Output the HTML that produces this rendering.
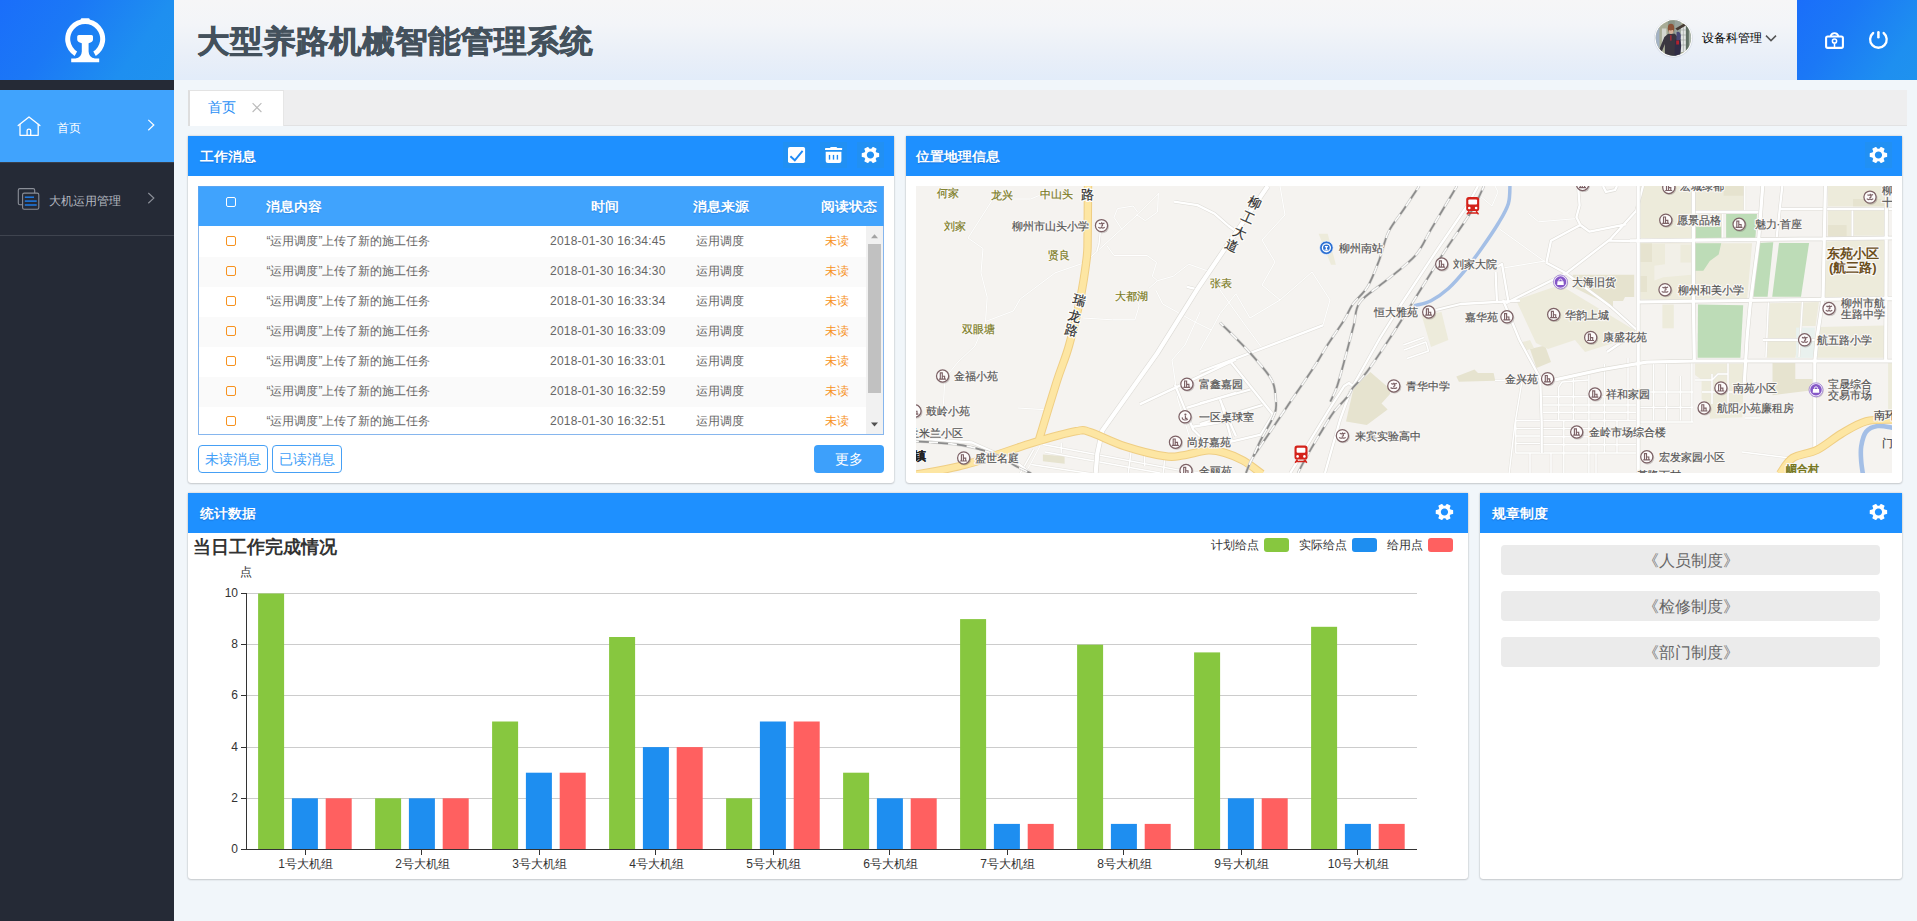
<!DOCTYPE html>
<html lang="zh"><head><meta charset="utf-8"><title>大型养路机械智能管理系统</title>
<style>
*{box-sizing:border-box;margin:0;padding:0}
html,body{width:1917px;height:921px;overflow:hidden}
body{position:relative;background:#f1f6fa;font-family:"Liberation Sans",sans-serif;font-size:12px;color:#666}
.abs{position:absolute}
.t{position:absolute;white-space:nowrap}
#side{left:0;top:0;width:174px;height:921px;background:#252a36}
#logo{left:0;top:0;width:174px;height:80px;background:linear-gradient(125deg,#1a6efa 0%,#1b78f6 35%,#1e8ff0 75%,#1f92ee 100%)}
#m1{left:0;top:90px;width:174px;height:72px;background:#40a3fd}
#m1b{left:0;top:162px;width:174px;height:1px;background:#3a3f4a}
#m2b{left:0;top:235px;width:174px;height:1px;background:#3f444f}
#head{left:174px;top:0;width:1623px;height:80px;background:linear-gradient(180deg,#f6f6f7 0%,#f3f5f8 30%,#e9eff8 70%,#e2ecf9 100%)}
#hr{left:1797px;top:0;width:120px;height:80px;background:linear-gradient(125deg,#1a6efa 0%,#1b78f6 35%,#1e8ff0 80%,#1f92ee 100%)}
#title{left:197px;top:18px;height:48px;line-height:48px;font-size:33px;font-weight:bold;color:#44515c;-webkit-text-stroke:.7px #44515c;transform:scaleY(.95);transform-origin:0 23.5px}
#tabbar{left:188px;top:90px;width:1719px;height:36px;background:#eeeeef;border-bottom:1px solid #e2e2e3}
#tab{left:188px;top:90px;width:96px;height:36px;background:#fff;border-left:2px solid #dedede;border-right:1px solid #e6e6e6;border-top:1px solid #e3e3e3}
.panel{position:absolute;background:#fff;border-radius:0 0 3px 3px;box-shadow:0 0 2px rgba(0,0,0,.24),0 1px 2px rgba(0,0,0,.12)}
.ph{position:absolute;left:0;top:0;right:0;height:40px;background:#1e90ff}
.pt{position:absolute;top:0;height:40px;line-height:40px;font-size:14px;font-weight:bold;color:#fff;white-space:nowrap;text-shadow:0 1px 1px rgba(0,40,120,.25);transform:scaleY(.94)}
.ib{position:absolute;width:27px;height:26px;background:#2190f3}
</style></head><body>
<div id="side" class="abs"></div>
<div id="logo" class="abs"></div>
<svg class="abs" style="left:60px;top:14px" width="50" height="52" viewBox="60 14 50 52">
<g fill="#fff" stroke="none">
<path d="M74.6 55.9 A20 20 0 1 1 95.8 55.9 L93.3 51.6 A15 15 0 1 0 77.1 51.6 Z"/>
<rect x="80.8" y="18.2" width="8.8" height="3.4" rx="1"/>
<path d="M78.9 34.9 H91.5 Q93 34.9 93 36.6 V39.6 Q93 42.4 88.6 43.2 V51.5 Q88.8 57.6 95 58.6 H99.2 V62.3 H71.2 V58.6 H75.4 Q81.6 57.6 81.8 51.5 V43.2 Q77.2 42.4 77.2 39.6 V36.6 Q77.2 34.9 78.9 34.9 Z"/>
</g></svg>
<div id="m1" class="abs"></div><div id="m1b" class="abs"></div><div id="m2b" class="abs"></div>
<svg class="abs" style="left:14px;top:112px" width="30" height="28" viewBox="14 112 30 28">
<g fill="none" stroke="#fff" stroke-width="1.3" stroke-linejoin="round" stroke-linecap="round">
<path d="M18.2 125.6 L29 117 L39.9 125.6"/>
<path d="M20 124.4 V135.3 H38.2 V124.4"/>
<path d="M27.1 135.3 V130.6 Q27.1 129.2 28.9 129.2 Q30.7 129.2 30.7 130.6 V135.3"/>
</g></svg>
<div class="t" style="left:57px;top:118px;height:20px;line-height:20px;font-size:12px;color:#fff">首页</div>
<svg class="abs" style="left:144px;top:116px" width="14" height="18" viewBox="144 116 14 18">
<path d="M148.3 119.9 L153.8 125 L148.3 130.2" fill="none" stroke="#fff" stroke-width="1.2"/></svg>
<svg class="abs" style="left:14px;top:184px" width="30" height="30" viewBox="14 184 30 30">
<rect x="18.3" y="188.6" width="16.4" height="16.2" rx="1.6" fill="none" stroke="#8b8f98" stroke-width="1.1"/>
<rect x="22.6" y="193.1" width="16.2" height="16.2" rx="1.6" fill="#252a36" stroke="#8b8f98" stroke-width="1.1"/>
<g stroke="#1e7be6" stroke-width="1.5"><path d="M24.8 197.2 H34"/><path d="M24.8 201.1 H36.7"/><path d="M24.8 205 H36.7"/></g>
</svg>
<div class="t" style="left:48.5px;top:191px;height:20px;line-height:20px;font-size:12px;color:#b4b8c0">大机运用管理</div>
<svg class="abs" style="left:144px;top:189px" width="14" height="18" viewBox="144 189 14 18">
<path d="M148.3 193 L153.8 198.1 L148.3 203.3" fill="none" stroke="#8b8f98" stroke-width="1.2"/></svg>
<div id="head" class="abs"></div>
<div id="title" class="t">大型养路机械智能管理系统</div>
<svg class="abs" style="left:1652px;top:17px" width="42" height="42" viewBox="0 0 42 42">
<defs><clipPath id="avc"><circle cx="21.4" cy="21" r="17.7"/></clipPath></defs>
<circle cx="21.4" cy="21.4" r="19.4" fill="rgba(140,150,175,.22)"/>
<circle cx="21.4" cy="21" r="18.7" fill="#fff"/>
<g clip-path="url(#avc)"><g transform="translate(21.4 21)">
<rect x="-19" y="-19" width="38" height="38" fill="#a8ac96"/>
<rect x="-19" y="-19" width="5" height="38" fill="#a3b2c4"/>
<rect x="-11.5" y="-9.5" width="4.5" height="15" fill="#d3d6cf"/>
<rect x="-5.5" y="-19" width="7" height="38" fill="#8b9588"/>
<rect x="1.5" y="-19" width="6" height="38" fill="#98a29c"/>
<rect x="7.5" y="-13" width="5" height="27" fill="#e2e5e4"/>
<path d="M7.5 -8 H12.5 M7.5 -3 H12.5 M7.5 2 H12.5 M7.5 7 H12.5 M10 -13 V14" stroke="#9aa09c" stroke-width=".6" fill="none"/>
<rect x="12.5" y="-19" width="3" height="38" fill="#5f6e63"/>
<rect x="15.5" y="-19" width="4" height="38" fill="#a9b4aa"/>
<rect x="-2" y="8" width="6" height="11" fill="#7f9a98"/>
<path d="M2 -9.5 L11.5 -15 L12.5 -12.5 L4 -7.5 Z" fill="#453b34"/>
<path d="M-14 11 L-9 -1 L-5.5 -4 L1.5 -4.2 L3.8 -1.5 L2.6 19 L-8.5 19 L-8.5 6 L-11.5 13.5 Z" fill="#3a3640"/>
<path d="M1.8 1.5 L7 1 L7.8 8 L6.6 19 L1 19 Z" fill="#302c46"/>
<ellipse cx="-2.4" cy="-9.8" rx="3.2" ry="4.4" fill="#8b5338"/>
<path d="M-4.6 -8 H-.2 V-5 Q-2.4 -3.2 -4.6 -5 Z" fill="#d6b198"/>
<path d="M-5.2 -8.6 Q-2.4 -6.4 .6 -9 L.2 -12 H-5 Z" fill="#8b5338"/>
<path d="M3.2 -6 Q6.8 -7.2 7.4 -2.4 L7 2 H3 Z" fill="#4a4976"/>
<rect x="-3.2" y="-2.8" width="1.3" height="5.4" fill="#b22a36"/>
<path d="M2.8 2.4 H5.6 V6.4 H2.8 Z" fill="#b3222e"/>
</g></g></svg>
<div class="t" style="left:1702px;top:28px;height:20px;line-height:20px;font-size:12px;color:#000">设备科管理</div>
<svg class="abs" style="left:1762px;top:31px" width="18" height="14" viewBox="1762 31 18 14">
<path d="M1766 35.6 L1771 40.6 L1776 35.6" fill="none" stroke="#555" stroke-width="1.5"/></svg>
<div id="hr" class="abs"></div>
<svg class="abs" style="left:1820px;top:27px" width="30" height="28" viewBox="1820 27 30 28">
<g fill="none" stroke="#fff" stroke-width="2.1">
<rect x="1826.1" y="36.5" width="16.8" height="11.4" rx="1.6"/>
<path d="M1830.6 36.4 A4 4.2 0 0 1 1838.4 36.4" stroke-width="1.9"/>
<circle cx="1834.5" cy="41" r="2.1" stroke-width="1.5"/>
<path d="M1834.5 43.2 V47.2" stroke-width="1.5"/>
</g></svg>
<svg class="abs" style="left:1864px;top:27px" width="30" height="28" viewBox="1864 27 30 28">
<g fill="none" stroke="#fff" stroke-linecap="round">
<path d="M1873.2 33 A8.3 8.3 0 1 0 1883.6 33" stroke-width="2.3"/>
<path d="M1878.4 32.2 V37.2" stroke-width="2.5"/>
</g></svg>
<div id="tabbar" class="abs"></div><div id="tab" class="abs"></div>
<div class="t" style="left:208px;top:96px;height:22px;line-height:22px;font-size:14px;color:#2b8ff5">首页</div>
<svg class="abs" style="left:250px;top:100px" width="14" height="14" viewBox="250 100 14 14">
<path d="M252.6 103.2 L261.4 112 M261.4 103.2 L252.6 112" fill="none" stroke="#bbb" stroke-width="1.1"/></svg>
<div class="panel" style="left:188px;top:136px;width:706px;height:347px"><div class="ph"></div><div class="pt" style="left:12px">工作消息</div></div>
<div class="ib" style="left:783px;top:142px"></div>
<div class="ib" style="left:820px;top:142px"></div>
<div class="ib" style="left:857px;top:142px"></div>
<svg class="abs" style="left:786px;top:145px" width="22" height="20" viewBox="786 145 22 20">
<rect x="788" y="146.9" width="17.1" height="16.2" rx="1.8" fill="#fff"/>
<path d="M790.4 156.3 L794.8 160.3 L802.6 150.8" fill="none" stroke="#1e8af5" stroke-width="1.9"/></svg>
<svg class="abs" style="left:822px;top:145px" width="24" height="20" viewBox="822 145 24 20">
<g fill="#fff"><rect x="825" y="148" width="17.1" height="2.1" rx=".4"/>
<path d="M829.8 148.2 Q830.2 146.9 831.5 146.9 H835.8 Q837 146.9 837.4 148.2 Z"/>
<path d="M825.7 151.8 H841.4 V161 Q841.4 163.1 839.3 163.1 H827.8 Q825.7 163.1 825.7 161 Z"/></g>
<g stroke="#1e8af5" stroke-width="1.4"><path d="M829.5 154.9 V159.6"/><path d="M833.5 154.9 V159.6"/><path d="M837.4 154.9 V159.6"/></g></svg>
<svg class="abs" style="left:860.05px;top:145.00px" width="20.9" height="20" viewBox="0 0 24 24" preserveAspectRatio="none"><path transform="rotate(90 12 12)" fill="#fff" d="M19.43 12.98c.04-.32.07-.64.07-.98s-.03-.66-.07-.98l2.11-1.65c.19-.15.24-.42.12-.64l-2-3.46c-.12-.22-.39-.3-.61-.22l-2.49 1c-.52-.4-1.08-.73-1.69-.98l-.38-2.65C14.46 2.18 14.25 2 14 2h-4c-.25 0-.46.18-.49.42l-.38 2.65c-.61.25-1.17.59-1.69.98l-2.49-1c-.23-.09-.49 0-.61.22l-2 3.46c-.13.22-.07.49.12.64l2.11 1.65c-.04.32-.07.65-.07.98s.03.66.07.98l-2.11 1.65c-.19.15-.24.42-.12.64l2 3.46c.12.22.39.3.61.22l2.49-1c.52.4 1.08.73 1.69.98l.38 2.65c.03.24.24.42.49.42h4c.25 0 .46-.18.49-.42l.38-2.65c.61-.25 1.17-.59 1.69-.98l2.49 1c.23.09.49 0 .61-.22l2-3.46c.12-.22.07-.49-.12-.64l-2.11-1.65zM12 16.2c-2.32 0-4.2-1.88-4.2-4.2s1.88-4.2 4.2-4.2 4.2 1.88 4.2 4.2-1.88 4.2-4.2 4.2z"/></svg>
<div class="abs" style="left:198px;top:186px;width:686px;height:40px;background:#40a3fd;border:1px solid #5ba6f3;border-bottom:none"></div>
<div class="abs" style="left:226px;top:197px;width:10px;height:10px;border:1px solid #fff;border-radius:2px"></div>
<div class="t" style="left:265.5px;top:195px;height:22px;line-height:22px;font-size:14px;font-weight:bold;color:#fff;text-shadow:0 1px 1px rgba(0,60,140,.22);transform:scaleY(.94)">消息内容</div>
<div class="t" style="left:590.5px;top:195px;height:22px;line-height:22px;font-size:14px;font-weight:bold;color:#fff;text-shadow:0 1px 1px rgba(0,60,140,.22);transform:scaleY(.94)">时间</div>
<div class="t" style="left:692.5px;top:195px;height:22px;line-height:22px;font-size:14px;font-weight:bold;color:#fff;text-shadow:0 1px 1px rgba(0,60,140,.22);transform:scaleY(.94)">消息来源</div>
<div class="t" style="left:821px;top:195px;height:22px;line-height:22px;font-size:14px;font-weight:bold;color:#fff;text-shadow:0 1px 1px rgba(0,60,140,.22);transform:scaleY(.94)">阅读状态</div>
<div class="abs" style="left:198px;top:226px;width:686px;height:209px;border:1px solid #86b6ee;border-top:none;background:#fff;overflow:hidden">
<div class="abs" style="left:0;top:1px;width:667px;height:30px;background:#fff"></div>
<div class="abs" style="left:27px;top:10px;width:10px;height:10px;border:1px solid #f7921e;border-radius:2px"></div>
<div class="t" style="left:67.5px;top:5px;height:20px;line-height:20px;font-size:12px;color:#666">“运用调度”上传了新的施工任务</div>
<div class="t" style="left:351px;top:5px;height:20px;line-height:20px;font-size:12px;color:#666;letter-spacing:.22px">2018-01-30 16:34:45</div>
<div class="t" style="left:497px;top:5px;height:20px;line-height:20px;font-size:12px;color:#666">运用调度</div>
<div class="t" style="left:625.5px;top:5px;height:20px;line-height:20px;font-size:12px;color:#f7921e">未读</div>
<div class="abs" style="left:0;top:31px;width:667px;height:30px;background:#fafafa"></div>
<div class="abs" style="left:27px;top:40px;width:10px;height:10px;border:1px solid #f7921e;border-radius:2px"></div>
<div class="t" style="left:67.5px;top:35px;height:20px;line-height:20px;font-size:12px;color:#666">“运用调度”上传了新的施工任务</div>
<div class="t" style="left:351px;top:35px;height:20px;line-height:20px;font-size:12px;color:#666;letter-spacing:.22px">2018-01-30 16:34:30</div>
<div class="t" style="left:497px;top:35px;height:20px;line-height:20px;font-size:12px;color:#666">运用调度</div>
<div class="t" style="left:625.5px;top:35px;height:20px;line-height:20px;font-size:12px;color:#f7921e">未读</div>
<div class="abs" style="left:0;top:61px;width:667px;height:30px;background:#fff"></div>
<div class="abs" style="left:27px;top:70px;width:10px;height:10px;border:1px solid #f7921e;border-radius:2px"></div>
<div class="t" style="left:67.5px;top:65px;height:20px;line-height:20px;font-size:12px;color:#666">“运用调度”上传了新的施工任务</div>
<div class="t" style="left:351px;top:65px;height:20px;line-height:20px;font-size:12px;color:#666;letter-spacing:.22px">2018-01-30 16:33:34</div>
<div class="t" style="left:497px;top:65px;height:20px;line-height:20px;font-size:12px;color:#666">运用调度</div>
<div class="t" style="left:625.5px;top:65px;height:20px;line-height:20px;font-size:12px;color:#f7921e">未读</div>
<div class="abs" style="left:0;top:91px;width:667px;height:30px;background:#fafafa"></div>
<div class="abs" style="left:27px;top:100px;width:10px;height:10px;border:1px solid #f7921e;border-radius:2px"></div>
<div class="t" style="left:67.5px;top:95px;height:20px;line-height:20px;font-size:12px;color:#666">“运用调度”上传了新的施工任务</div>
<div class="t" style="left:351px;top:95px;height:20px;line-height:20px;font-size:12px;color:#666;letter-spacing:.22px">2018-01-30 16:33:09</div>
<div class="t" style="left:497px;top:95px;height:20px;line-height:20px;font-size:12px;color:#666">运用调度</div>
<div class="t" style="left:625.5px;top:95px;height:20px;line-height:20px;font-size:12px;color:#f7921e">未读</div>
<div class="abs" style="left:0;top:121px;width:667px;height:30px;background:#fff"></div>
<div class="abs" style="left:27px;top:130px;width:10px;height:10px;border:1px solid #f7921e;border-radius:2px"></div>
<div class="t" style="left:67.5px;top:125px;height:20px;line-height:20px;font-size:12px;color:#666">“运用调度”上传了新的施工任务</div>
<div class="t" style="left:351px;top:125px;height:20px;line-height:20px;font-size:12px;color:#666;letter-spacing:.22px">2018-01-30 16:33:01</div>
<div class="t" style="left:497px;top:125px;height:20px;line-height:20px;font-size:12px;color:#666">运用调度</div>
<div class="t" style="left:625.5px;top:125px;height:20px;line-height:20px;font-size:12px;color:#f7921e">未读</div>
<div class="abs" style="left:0;top:151px;width:667px;height:30px;background:#fafafa"></div>
<div class="abs" style="left:27px;top:160px;width:10px;height:10px;border:1px solid #f7921e;border-radius:2px"></div>
<div class="t" style="left:67.5px;top:155px;height:20px;line-height:20px;font-size:12px;color:#666">“运用调度”上传了新的施工任务</div>
<div class="t" style="left:351px;top:155px;height:20px;line-height:20px;font-size:12px;color:#666;letter-spacing:.22px">2018-01-30 16:32:59</div>
<div class="t" style="left:497px;top:155px;height:20px;line-height:20px;font-size:12px;color:#666">运用调度</div>
<div class="t" style="left:625.5px;top:155px;height:20px;line-height:20px;font-size:12px;color:#f7921e">未读</div>
<div class="abs" style="left:0;top:181px;width:667px;height:30px;background:#fff"></div>
<div class="abs" style="left:27px;top:190px;width:10px;height:10px;border:1px solid #f7921e;border-radius:2px"></div>
<div class="t" style="left:67.5px;top:185px;height:20px;line-height:20px;font-size:12px;color:#666">“运用调度”上传了新的施工任务</div>
<div class="t" style="left:351px;top:185px;height:20px;line-height:20px;font-size:12px;color:#666;letter-spacing:.22px">2018-01-30 16:32:51</div>
<div class="t" style="left:497px;top:185px;height:20px;line-height:20px;font-size:12px;color:#666">运用调度</div>
<div class="t" style="left:625.5px;top:185px;height:20px;line-height:20px;font-size:12px;color:#f7921e">未读</div>
<div class="abs" style="left:667px;top:0;width:17px;height:208px;background:#f1f1f1"></div>
<div class="abs" style="left:669px;top:18px;width:13px;height:149px;background:#c1c1c1"></div>
<svg class="abs" style="left:667px;top:0" width="17" height="208" viewBox="0 0 17 208"><path d="M5 12.2 L8.5 8.2 L12 12.2 Z" fill="#a3a3a3"/><path d="M5 196.4 L8.5 200.4 L12 196.4 Z" fill="#505050"/></svg>
</div>
<div class="t" style="left:198px;width:70px;top:445px;height:28px;line-height:26px;font-size:14px;border-radius:4px;text-align:center;border:1px solid #46a0f5;color:#409ef8;background:#fff">未读消息</div>
<div class="t" style="left:272px;width:70px;top:445px;height:28px;line-height:26px;font-size:14px;border-radius:4px;text-align:center;border:1px solid #46a0f5;color:#409ef8;background:#fff">已读消息</div>
<div class="t" style="left:814px;width:70px;top:445px;height:28px;line-height:26px;font-size:14px;border-radius:4px;text-align:center;line-height:28px;color:#fff;background:#3da0fb">更多</div>
<div class="panel" style="left:906px;top:136px;width:996px;height:347px"><div class="ph"></div><div class="pt" style="left:10px">位置地理信息</div></div>
<div class="ib" style="left:1865px;top:142px"></div>
<svg class="abs" style="left:1868.05px;top:145.00px" width="20.9" height="20" viewBox="0 0 24 24" preserveAspectRatio="none"><path transform="rotate(90 12 12)" fill="#fff" d="M19.43 12.98c.04-.32.07-.64.07-.98s-.03-.66-.07-.98l2.11-1.65c.19-.15.24-.42.12-.64l-2-3.46c-.12-.22-.39-.3-.61-.22l-2.49 1c-.52-.4-1.08-.73-1.69-.98l-.38-2.65C14.46 2.18 14.25 2 14 2h-4c-.25 0-.46.18-.49.42l-.38 2.65c-.61.25-1.17.59-1.69.98l-2.49-1c-.23-.09-.49 0-.61.22l-2 3.46c-.13.22-.07.49.12.64l2.11 1.65c-.04.32-.07.65-.07.98s.03.66.07.98l-2.11 1.65c-.19.15-.24.42-.12.64l2 3.46c.12.22.39.3.61.22l2.49-1c.52.4 1.08.73 1.69.98l.38 2.65c.03.24.24.42.49.42h4c.25 0 .46-.18.49-.42l.38-2.65c.61-.25 1.17-.59 1.69-.98l2.49 1c.23.09.49 0 .61-.22l2-3.46c.12-.22.07-.49-.12-.64l-2.11-1.65zM12 16.2c-2.32 0-4.2-1.88-4.2-4.2s1.88-4.2 4.2-4.2 4.2 1.88 4.2 4.2-1.88 4.2-4.2 4.2z"/></svg>
<svg class="abs" style="left:916px;top:186px" width="976" height="287" viewBox="916 186 976 287"><defs><g id="poi"><circle cx=".9" cy="1" r="6.6" fill="rgba(90,80,80,.28)"/><circle r="6.1" fill="#fdfbfb" stroke="#7d6266" stroke-width="1.25"/><path d="M-2.3 3.1 V-3.2 H-.3 V3.1 M-.3 3.1 V.2 H2 V3.1 M-3.6 3.1 H3.4" fill="none" stroke="#7d6266" stroke-width="1.15"/></g><g id="sch"><circle cx=".9" cy="1" r="6.6" fill="rgba(90,80,80,.28)"/><circle r="6.1" fill="#fdfbfb" stroke="#7d6266" stroke-width="1.25"/><path d="M-2.6 -2.4 Q-.4 -1.2 .2 -2.6 Q1.2 -1.4 3 -2.6 M.4 -1.6 Q2.2 .2 -.6 .6 M-3.2 1.6 Q-1.8 3.2 0 2 Q1.8 3.2 3.2 1.6" fill="none" stroke="#7d6266" stroke-width="1.2"/></g><g id="pp"><circle cx=".9" cy="1" r="6.6" fill="rgba(90,80,80,.28)"/><circle r="6.1" fill="#fdfbfb" stroke="#7d6266" stroke-width="1.25"/><circle cx=".4" cy="-2.2" r="1.1" fill="#7d6266"/><path d="M.4 -1 V1.6 H2.4 M-2.8 .6 Q-2.6 3.4 0 3.2 Q2.2 3.2 2.8 2.2" fill="none" stroke="#7d6266" stroke-width="1.15"/></g><g id="shop"><circle cx=".8" cy=".9" r="7" fill="rgba(90,80,80,.22)"/><circle r="6.4" fill="#8557c7" stroke="#f3ecfb" stroke-width="1.3"/><circle r="7" fill="none" stroke="#8e6bc8" stroke-width=".7"/><path d="M-3 -.8 H3 L3.3 3 H-3.3 Z" fill="#fff"/><path d="M-1.6 -.6 V-1.4 A1.6 1.6 0 0 1 1.6 -1.4 V-.6" fill="none" stroke="#fff" stroke-width=".9"/></g><g id="sta"><circle r="6.8" fill="#2b6fd2" stroke="#eef3fb" stroke-width=".8"/><circle r="4.6" fill="#fff"/><circle r="3.3" fill="#2b6fd2"/><path d="M-1.5 -1.7 H1.5 V-.5 H.6 V1.7 H1.9 V2.6 H-1.9 V1.7 H-.6 V-.5 H-1.5 Z" fill="#fff"/></g><g id="trn"><rect x="-6.5" y="-8.5" width="13" height="14" rx="2.6" fill="#d4221a"/><rect x="-4.4" y="-6.2" width="8.8" height="5" rx="1" fill="#fff"/><circle cx="-3.4" cy="2.4" r="1.3" fill="#fff"/><circle cx="3.4" cy="2.4" r="1.3" fill="#fff"/><path d="M-3.5 5.5 L-5.8 8.8 M3.5 5.5 L5.8 8.8 M-4.6 7.4 H4.6" stroke="#d4221a" stroke-width="1.5" fill="none"/></g></defs><rect x="916" y="186" width="976" height="287" fill="#f5f3f0"/><polygon points="1318.6,233.7 1327.7,233.7 1335.9,264.7 1331.0,264.7" fill="#edebdb"/><polygon points="1421.5,315.0 1441.5,312.0 1448.4,340.0 1431.0,346.9" fill="#edebdb"/><polygon points="1370.3,372.0 1389.4,388.6 1390.2,393.8 1381.5,403.4 1387.6,409.5 1366.8,425.0 1346.0,421.6 1353.8,386.9" fill="#e6e3cf"/><polygon points="1456.3,376.5 1474.5,369.5 1478.0,373.0 1493.6,373.0 1495.3,380.8 1458.9,381.7" fill="#e6e3cf"/><polygon points="1530.0,349.0 1545.0,345.5 1551.0,362.0 1536.5,368.0" fill="#e6e3cf"/><polygon points="1519.0,343.0 1530.0,340.0 1534.0,348.0 1524.0,351.0" fill="#edebdb"/><polygon points="1516.0,300.0 1560.0,285.0 1636.0,331.0 1636.0,336.0 1585.0,352.0 1575.0,340.0 1548.0,349.0 1536.0,343.0" fill="#edebdb"/><polygon points="1572.6,274.8 1634.2,274.8 1634.2,297.0 1625.0,297.0 1623.0,301.0 1613.0,301.0 1613.0,307.0 1575.0,288.0" fill="#e6e3cf"/><polygon points="1640.6,186.0 1691.9,186.0 1691.9,238.1 1640.6,238.1" fill="#edebdb"/><polygon points="1695.1,186.0 1745.6,186.0 1744.0,210.4 1695.1,210.4" fill="#edebdb"/><polygon points="1723.6,186.0 1745.6,186.0 1745.3,195.8 1723.6,195.8" fill="#e6e3cf"/><polygon points="1695.1,214.0 1722.0,214.0 1722.0,238.1 1695.1,238.1" fill="#edebdb"/><polygon points="1695.1,243.3 1752.1,243.3 1747.2,298.4 1695.1,298.4" fill="#edebdb"/><polygon points="1640.6,243.3 1691.9,243.3 1691.9,299.5 1640.6,299.5" fill="#edebdb"/><polygon points="1665.0,243.8 1691.9,243.8 1691.9,274.7 1663.4,277.2 1654.4,280.4 1654.4,265.8 1665.0,264.2" fill="#f2f0e8"/><polygon points="1680.5,244.6 1691.0,244.6 1691.0,262.5 1680.5,262.5" fill="#edebdb"/><polygon points="1640.6,243.3 1652.0,243.3 1652.0,262.0 1640.6,262.0" fill="#e6e3cf"/><polygon points="1640.6,276.0 1647.0,276.0 1647.0,292.0 1640.6,292.0" fill="#e6e3cf"/><polygon points="1827.9,186.0 1884.0,186.0 1884.0,206.4 1827.9,206.4" fill="#edebdb"/><polygon points="1853.1,199.0 1884.0,199.0 1884.0,206.4 1853.1,206.4" fill="#e6e3cf"/><polygon points="1827.9,210.4 1851.5,210.4 1851.5,236.5 1827.9,236.5" fill="#edebdb"/><polygon points="1827.9,225.1 1846.6,225.1 1846.6,236.5 1827.9,236.5" fill="#e6e3cf"/><polygon points="1853.9,210.4 1884.0,210.4 1884.0,235.7 1853.9,235.7" fill="#edebdb"/><polygon points="1825.4,241.4 1884.0,239.7 1884.0,296.7 1822.2,297.5" fill="#edebdb"/><polygon points="1770.0,303.2 1801.0,302.4 1799.4,336.0 1795.3,357.8 1766.8,357.8 1766.8,336.0" fill="#edebdb"/><polygon points="1803.4,302.4 1818.9,302.0 1815.6,326.0 1801.8,326.0" fill="#edebdb"/><polygon points="1796.1,327.6 1814.8,327.6 1814.8,357.8 1796.1,357.8" fill="#e9f1ee"/><polygon points="1818.9,327.0 1884.0,325.5 1884.0,357.8 1817.3,357.8" fill="#edebdb"/><polygon points="1695.1,363.5 1744.0,363.5 1742.4,417.2 1709.8,418.8 1709.8,404.2 1701.6,399.3 1701.6,379.7 1695.1,374.9" fill="#edebdb"/><polygon points="1772.5,362.6 1795.3,362.6 1795.3,378.9 1812.4,378.9 1812.4,390.3 1772.5,395.2" fill="#e6e3cf"/><polygon points="1888.1,362.6 1892.0,362.6 1892.0,409.0 1888.1,409.0" fill="#edebdb"/><polygon points="1662.4,304.5 1673.8,304.5 1673.8,328.3 1662.4,328.3" fill="#edebdb"/><polygon points="1042.9,454.5 1064.6,456.2 1064.6,463.7 1042.9,461.2" fill="#e6e3cf"/><polygon points="1696.0,226.7 1721.2,226.7 1721.2,238.1 1696.0,238.1" fill="#bddcb7"/><polygon points="1726.1,214.0 1757.0,214.0 1755.4,238.1 1726.1,238.1" fill="#bddcb7"/><polygon points="1695.1,243.3 1721.2,243.3 1718.7,254.4 1709.8,260.9 1703.3,270.7 1695.1,270.7" fill="#bddcb7"/><polygon points="1758.6,243.0 1773.3,242.2 1767.6,296.7 1753.4,296.7" fill="#bddcb7"/><polygon points="1779.0,243.0 1809.1,243.0 1801.0,296.7 1772.2,296.7" fill="#bddcb7"/><polygon points="1698.0,304.5 1743.2,305.2 1740.4,357.8 1697.6,357.8" fill="#bddcb7"/><path d="M992.4 199.9 L968.0 238.0 L983.0 248.5 L981.0 272.9 L987.2 297.2 L985.5 321.5 L1013.3 311.0 L1020.2 299.0 L1055.0 272.9 L1082.8 263.3 M1013.3 199.0 L1030.7 199.0 L1041.0 194.7 M985.5 321.5 L975.0 346.0 L958.0 362.0 L945.0 378.0 L943.0 410.0 M1090.6 257.2 L1138.4 213.8 L1159.2 193.0 M1107.1 245.9 L1114.0 255.5 L1147.0 255.5 L1156.6 262.4 L1152.3 276.3 L1157.5 280.7 L1173.1 276.3 L1188.8 264.2 L1207.9 271.0 M1148.8 288.5 L1157.5 280.7 M1155.8 290.2 L1162.7 304.0 L1194.0 321.5 L1211.3 330.0 M1082.8 318.0 L1112.3 319.8 L1134.9 319.8 L1139.2 305.9 L1137.5 301.5 M1114.0 217.3 L1117.5 208.6 L1133.2 206.0 L1137.5 212.0 M1114.0 217.3 L1121.9 229.4 M1136.6 214.7 L1145.3 220.7 L1157.5 212.0 L1158.4 193.0 M1236.0 293.7 L1220.0 313.7 L1211.3 330.0 L1200.0 350.0 M1018.0 408.0 L1050.0 410.0 M1200.0 312.0 L1185.0 345.0 L1172.0 360.0 L1178.0 400.0 L1192.0 445.0 M1220.0 290.0 L1245.0 325.0 L1262.0 348.0 M1280.0 186.0 L1285.0 215.0 L1262.0 240.0 L1275.0 262.0 L1262.0 285.0 L1280.0 300.0 L1312.0 272.0 L1330.0 300.0 M1330.0 300.0 L1323.0 325.0 M1280.0 300.0 L1250.0 318.0 L1236.0 294.0 M1040.0 446.0 L1030.0 465.0 L1025.0 473.0 M1499.5 229.0 L1546.4 262.8 M1528.2 213.4 L1538.6 221.8 L1576.4 218.6 M1480.0 196.0 L1492.0 206.0 L1498.0 192.0 L1495.0 186.0 M1503.0 268.0 L1545.0 261.0" fill="none" stroke="#ebe9e5" stroke-width="1.8" stroke-linejoin="round" opacity=".6"/><path d="M992.4 199.9 L968.0 238.0 L983.0 248.5 L981.0 272.9 L987.2 297.2 L985.5 321.5 L1013.3 311.0 L1020.2 299.0 L1055.0 272.9 L1082.8 263.3 M1013.3 199.0 L1030.7 199.0 L1041.0 194.7 M985.5 321.5 L975.0 346.0 L958.0 362.0 L945.0 378.0 L943.0 410.0 M1090.6 257.2 L1138.4 213.8 L1159.2 193.0 M1107.1 245.9 L1114.0 255.5 L1147.0 255.5 L1156.6 262.4 L1152.3 276.3 L1157.5 280.7 L1173.1 276.3 L1188.8 264.2 L1207.9 271.0 M1148.8 288.5 L1157.5 280.7 M1155.8 290.2 L1162.7 304.0 L1194.0 321.5 L1211.3 330.0 M1082.8 318.0 L1112.3 319.8 L1134.9 319.8 L1139.2 305.9 L1137.5 301.5 M1114.0 217.3 L1117.5 208.6 L1133.2 206.0 L1137.5 212.0 M1114.0 217.3 L1121.9 229.4 M1136.6 214.7 L1145.3 220.7 L1157.5 212.0 L1158.4 193.0 M1236.0 293.7 L1220.0 313.7 L1211.3 330.0 L1200.0 350.0 M1018.0 408.0 L1050.0 410.0 M1200.0 312.0 L1185.0 345.0 L1172.0 360.0 L1178.0 400.0 L1192.0 445.0 M1220.0 290.0 L1245.0 325.0 L1262.0 348.0 M1280.0 186.0 L1285.0 215.0 L1262.0 240.0 L1275.0 262.0 L1262.0 285.0 L1280.0 300.0 L1312.0 272.0 L1330.0 300.0 M1330.0 300.0 L1323.0 325.0 M1280.0 300.0 L1250.0 318.0 L1236.0 294.0 M1040.0 446.0 L1030.0 465.0 L1025.0 473.0 M1499.5 229.0 L1546.4 262.8 M1528.2 213.4 L1538.6 221.8 L1576.4 218.6 M1480.0 196.0 L1492.0 206.0 L1498.0 192.0 L1495.0 186.0 M1503.0 268.0 L1545.0 261.0" fill="none" stroke="#ffffff" stroke-width="1.0" stroke-linejoin="round" /><path d="M1100.2 232.9 L1099.0 244.0 L1096.7 252.0 M1042.9 444.5 L1176.4 469.6 L1200.0 473.0 M1031.2 464.5 L1100.0 475.0 M1045.0 452.0 L1160.0 473.0 M1061.2 442.8 L1061.2 453.0 M1131.4 449.5 L1128.0 474.6 M1144.7 454.5 L1144.7 466.0 M1164.7 459.5 L1163.0 474.6 M1033.7 449.5 L1019.5 474.6 M1404.0 350.0 L1425.9 342.0 L1428.5 351.0 L1407.0 358.5 M1403.3 345.0 L1424.0 337.5 M1521.7 382.8 L1515.1 422.7 L1509.2 473.0 M1495.0 380.5 L1545.0 380.5 M1695.0 380.0 L1712.0 380.0 L1718.0 374.0 L1728.0 374.0 M1702.0 392.0 L1744.0 392.0 M1712.0 374.0 L1712.0 404.0 M1728.0 363.0 L1728.0 404.0 M1744.8 186.0 L1744.8 210.4 M1852.3 208.8 L1852.3 236.5 M1722.8 212.0 L1722.8 238.0 M1802.6 300.0 L1799.0 357.0 M1768.4 301.6 L1766.0 357.0 M1745.0 418.0 L1760.0 418.0 M1742.0 452.0 L1790.0 458.0 L1790.0 473.0 M1892.0 300.0 L1888.0 300.0 M1541.7 396.8 L1637.6 396.8 M1541.7 405.0 L1637.6 405.0 M1541.7 412.3 L1637.6 412.3 M1541.7 428.6 L1637.6 428.6 M1541.7 436.7 L1637.6 436.7 M1541.7 444.8 L1637.6 444.8 M1515.8 420.5 L1637.6 420.5 M1515.8 453.0 L1637.6 453.0 M1515.8 428.6 L1541.7 428.6 M1515.8 436.0 L1541.7 436.0 M1515.8 443.4 L1541.7 443.4 M1558.7 387.0 L1558.7 420.5 M1573.4 377.0 L1573.4 420.5 M1588.9 374.0 L1588.9 473.0 M1604.4 364.0 L1604.4 453.0 M1617.0 421.0 L1617.0 453.0 M1628.0 358.0 L1628.0 421.0 M1563.8 421.0 L1563.8 473.0 M1596.0 453.0 L1596.0 473.0 M1515.8 420.5 L1515.8 453.0 M1551.0 453.0 L1551.0 473.0 M1530.0 453.0 L1530.0 473.0 M1653.6 363.0 L1653.6 420.4 M1666.6 363.0 L1666.6 420.4 M1680.5 376.0 L1680.5 420.4 M1691.9 363.0 L1691.9 422.0 M1640.0 392.0 L1693.0 392.0 M1640.0 407.4 L1693.0 407.4 M1640.0 422.0 L1693.0 422.0 M1558.7 387.0 L1562.0 382.0 L1588.0 380.0" fill="none" stroke="#e6e4df" stroke-width="2.6" stroke-linejoin="round" /><path d="M1100.2 232.9 L1099.0 244.0 L1096.7 252.0 M1042.9 444.5 L1176.4 469.6 L1200.0 473.0 M1031.2 464.5 L1100.0 475.0 M1045.0 452.0 L1160.0 473.0 M1061.2 442.8 L1061.2 453.0 M1131.4 449.5 L1128.0 474.6 M1144.7 454.5 L1144.7 466.0 M1164.7 459.5 L1163.0 474.6 M1033.7 449.5 L1019.5 474.6 M1404.0 350.0 L1425.9 342.0 L1428.5 351.0 L1407.0 358.5 M1403.3 345.0 L1424.0 337.5 M1521.7 382.8 L1515.1 422.7 L1509.2 473.0 M1495.0 380.5 L1545.0 380.5 M1695.0 380.0 L1712.0 380.0 L1718.0 374.0 L1728.0 374.0 M1702.0 392.0 L1744.0 392.0 M1712.0 374.0 L1712.0 404.0 M1728.0 363.0 L1728.0 404.0 M1744.8 186.0 L1744.8 210.4 M1852.3 208.8 L1852.3 236.5 M1722.8 212.0 L1722.8 238.0 M1802.6 300.0 L1799.0 357.0 M1768.4 301.6 L1766.0 357.0 M1745.0 418.0 L1760.0 418.0 M1742.0 452.0 L1790.0 458.0 L1790.0 473.0 M1892.0 300.0 L1888.0 300.0 M1541.7 396.8 L1637.6 396.8 M1541.7 405.0 L1637.6 405.0 M1541.7 412.3 L1637.6 412.3 M1541.7 428.6 L1637.6 428.6 M1541.7 436.7 L1637.6 436.7 M1541.7 444.8 L1637.6 444.8 M1515.8 420.5 L1637.6 420.5 M1515.8 453.0 L1637.6 453.0 M1515.8 428.6 L1541.7 428.6 M1515.8 436.0 L1541.7 436.0 M1515.8 443.4 L1541.7 443.4 M1558.7 387.0 L1558.7 420.5 M1573.4 377.0 L1573.4 420.5 M1588.9 374.0 L1588.9 473.0 M1604.4 364.0 L1604.4 453.0 M1617.0 421.0 L1617.0 453.0 M1628.0 358.0 L1628.0 421.0 M1563.8 421.0 L1563.8 473.0 M1596.0 453.0 L1596.0 473.0 M1515.8 420.5 L1515.8 453.0 M1551.0 453.0 L1551.0 473.0 M1530.0 453.0 L1530.0 473.0 M1653.6 363.0 L1653.6 420.4 M1666.6 363.0 L1666.6 420.4 M1680.5 376.0 L1680.5 420.4 M1691.9 363.0 L1691.9 422.0 M1640.0 392.0 L1693.0 392.0 M1640.0 407.4 L1693.0 407.4 M1640.0 422.0 L1693.0 422.0 M1558.7 387.0 L1562.0 382.0 L1588.0 380.0" fill="none" stroke="#ffffff" stroke-width="1.4" stroke-linejoin="round" /><path d="M1506.0 303.2 L1566.0 273.3 L1610.2 239.4 L1636.3 210.7 L1643.0 186.0 M1546.4 262.8 L1566.0 273.3 L1610.0 306.0 L1638.0 331.0 M1546.4 262.8 L1551.0 240.7 L1580.3 225.0 L1576.4 217.3 L1579.6 205.5 L1578.3 188.6 M1580.3 225.0 L1589.4 231.6 L1625.9 224.4 M1609.0 240.7 L1640.0 241.0 M1493.0 269.4 L1502.0 264.0 L1508.7 303.2 M1495.6 272.0 L1497.0 303.0 M1603.0 186.0 L1606.0 192.0 L1615.0 190.0 L1617.0 186.0 M1503.0 300.0 L1519.5 340.0 L1540.2 378.4 L1541.7 422.7 L1541.7 453.0 M1607.0 352.0 L1638.0 331.0 M1478.0 186.0 L1467.0 206.0 L1437.0 250.0 L1400.0 306.0 L1380.0 338.0 L1352.9 386.0 L1349.0 383.0 L1344.2 386.0 L1330.0 408.0 L1290.3 473.0 M1351.0 389.5 L1340.0 420.0 L1325.0 473.0 M1436.0 310.0 L1460.6 304.0 L1520.0 300.7 M1200.0 372.0 L1323.4 325.2 M1200.0 403.4 L1250.4 389.5 M1231.3 362.6 L1273.0 414.7 L1260.8 434.7 L1231.3 441.6 L1200.0 449.0 M1200.0 424.0 L1262.5 405.0 M1220.8 400.8 L1232.0 441.6 M1139.7 404.4 L1236.0 359.4 M1186.5 407.8 L1236.0 392.8 M1174.8 384.4 L1193.1 429.5 L1199.8 436.2 M1191.5 427.0 L1236.0 419.5 M1219.8 399.4 L1236.0 436.2 M916.0 438.5 L972.0 442.5 L1016.0 462.0 L1030.0 473.0 M1174.0 201.6 L1197.4 205.1 L1214.8 213.8 L1228.7 226.0 L1236.0 231.2 M1187.0 286.8 L1197.4 289.4 M1782.3 186.0 L1776.6 238.0 M1693.2 212.0 L1758.6 212.0 M1779.8 208.8 L1892.0 208.8 M1763.0 339.8 L1815.0 339.8" fill="none" stroke="#dfddd8" stroke-width="3.4" stroke-linejoin="round" /><path d="M1506.0 303.2 L1566.0 273.3 L1610.2 239.4 L1636.3 210.7 L1643.0 186.0 M1546.4 262.8 L1566.0 273.3 L1610.0 306.0 L1638.0 331.0 M1546.4 262.8 L1551.0 240.7 L1580.3 225.0 L1576.4 217.3 L1579.6 205.5 L1578.3 188.6 M1580.3 225.0 L1589.4 231.6 L1625.9 224.4 M1609.0 240.7 L1640.0 241.0 M1493.0 269.4 L1502.0 264.0 L1508.7 303.2 M1495.6 272.0 L1497.0 303.0 M1603.0 186.0 L1606.0 192.0 L1615.0 190.0 L1617.0 186.0 M1503.0 300.0 L1519.5 340.0 L1540.2 378.4 L1541.7 422.7 L1541.7 453.0 M1607.0 352.0 L1638.0 331.0 M1478.0 186.0 L1467.0 206.0 L1437.0 250.0 L1400.0 306.0 L1380.0 338.0 L1352.9 386.0 L1349.0 383.0 L1344.2 386.0 L1330.0 408.0 L1290.3 473.0 M1351.0 389.5 L1340.0 420.0 L1325.0 473.0 M1436.0 310.0 L1460.6 304.0 L1520.0 300.7 M1200.0 372.0 L1323.4 325.2 M1200.0 403.4 L1250.4 389.5 M1231.3 362.6 L1273.0 414.7 L1260.8 434.7 L1231.3 441.6 L1200.0 449.0 M1200.0 424.0 L1262.5 405.0 M1220.8 400.8 L1232.0 441.6 M1139.7 404.4 L1236.0 359.4 M1186.5 407.8 L1236.0 392.8 M1174.8 384.4 L1193.1 429.5 L1199.8 436.2 M1191.5 427.0 L1236.0 419.5 M1219.8 399.4 L1236.0 436.2 M916.0 438.5 L972.0 442.5 L1016.0 462.0 L1030.0 473.0 M1174.0 201.6 L1197.4 205.1 L1214.8 213.8 L1228.7 226.0 L1236.0 231.2 M1187.0 286.8 L1197.4 289.4 M1782.3 186.0 L1776.6 238.0 M1693.2 212.0 L1758.6 212.0 M1779.8 208.8 L1892.0 208.8 M1763.0 339.8 L1815.0 339.8" fill="none" stroke="#ffffff" stroke-width="2.3" stroke-linejoin="round" /><path d="M1630.0 240.9 L1892.0 238.0 M1638.0 302.0 L1892.0 298.4 M1555.0 379.9 L1600.0 370.0 L1646.5 362.1 L1694.0 361.0 L1892.0 361.0 M1638.2 186.0 L1638.2 473.0 M1693.4 186.0 L1693.4 303.0 L1694.3 361.0 M1762.7 186.0 L1758.6 240.5 L1750.5 301.6 L1747.2 336.0 L1744.0 388.0 M1825.4 186.0 L1823.0 298.4 L1817.3 336.0 L1814.8 361.0 L1814.8 448.0 M1886.5 186.0 L1885.7 361.0" fill="none" stroke="#dddbd5" stroke-width="4.4" stroke-linejoin="round" /><path d="M1630.0 240.9 L1892.0 238.0 M1638.0 302.0 L1892.0 298.4 M1555.0 379.9 L1600.0 370.0 L1646.5 362.1 L1694.0 361.0 L1892.0 361.0 M1638.2 186.0 L1638.2 473.0 M1693.4 186.0 L1693.4 303.0 L1694.3 361.0 M1762.7 186.0 L1758.6 240.5 L1750.5 301.6 L1747.2 336.0 L1744.0 388.0 M1825.4 186.0 L1823.0 298.4 L1817.3 336.0 L1814.8 361.0 L1814.8 448.0 M1886.5 186.0 L1885.7 361.0" fill="none" stroke="#ffffff" stroke-width="3.2" stroke-linejoin="round" /><path d="M1267.8 186.0 L1222.6 252.0 L1196.6 290.3 L1157.6 352.7 L1102.2 430.8 L1097.3 453.6 L1095.7 473.0" fill="none" stroke="#dcdad5" stroke-width="5.4" stroke-linejoin="round" /><path d="M1267.8 186.0 L1222.6 252.0 L1196.6 290.3 L1157.6 352.7 L1102.2 430.8 L1097.3 453.6 L1095.7 473.0" fill="none" stroke="#ffffff" stroke-width="4.2" stroke-linejoin="round" /><path d="M1510.0 184.0 C1509.7 187.2 1510.3 197.0 1508.4 203.4 C1506.5 209.8 1503.3 215.0 1498.8 222.5 C1494.3 230.0 1487.0 240.7 1481.5 248.5 C1476.0 256.3 1471.3 262.7 1465.8 269.4 C1460.3 276.1 1454.2 283.3 1448.4 288.5 C1442.6 293.7 1436.5 297.9 1431.0 300.7 C1425.5 303.5 1418.0 304.7 1415.4 305.5" fill="none" stroke="#a4bfe6" stroke-width="3.5" stroke-linejoin="round" stroke-linecap="round"/><path d="M1893.0 427.8 C1890.4 427.5 1882.0 425.4 1877.5 426.1 C1873.0 426.8 1868.8 428.4 1866.1 431.8 C1863.4 435.2 1862.0 441.6 1861.2 446.5 C1860.4 451.4 1860.9 456.6 1861.2 461.2 C1861.5 465.8 1862.6 471.9 1862.9 474.0" fill="none" stroke="#a4bfe6" stroke-width="4.6" stroke-linejoin="round" /><path d="M1088.0 184.0 C1087.9 193.3 1087.8 227.5 1087.6 240.0 C1087.4 252.5 1087.8 249.2 1086.6 259.0 C1085.4 268.8 1083.2 284.5 1080.2 299.0 C1077.2 313.5 1072.8 332.2 1068.9 346.0 C1065.0 359.8 1061.6 366.2 1056.6 382.0 C1051.6 397.8 1041.7 430.8 1038.7 440.6 M914.0 475.0 C922.7 473.2 946.2 469.9 966.0 464.5 C985.8 459.1 1014.5 448.4 1032.9 442.8 C1051.3 437.2 1066.8 433.0 1076.3 431.2 C1085.8 429.4 1081.5 429.5 1089.6 432.0 C1097.7 434.5 1112.2 442.2 1124.7 446.2 C1137.2 450.2 1155.0 454.7 1164.7 456.2 C1174.4 457.7 1175.8 456.4 1183.0 455.4 C1190.2 454.4 1201.2 450.8 1208.2 450.4 C1215.2 450.0 1218.9 451.2 1224.8 452.9 C1230.7 454.6 1237.2 457.2 1243.4 460.7 C1249.6 464.2 1258.9 471.8 1262.0 474.0 M1893.0 419.6 C1888.5 419.9 1874.6 419.0 1866.1 421.3 C1857.5 423.6 1849.8 428.8 1841.7 433.5 C1833.6 438.2 1825.5 445.7 1817.3 449.8 C1809.1 453.9 1799.0 453.9 1792.8 457.9 C1786.5 461.9 1782.0 471.3 1779.8 474.0" fill="none" stroke="#efce84" stroke-width="8.4" stroke-linejoin="round" /><path d="M1088.0 184.0 C1087.9 193.3 1087.8 227.5 1087.6 240.0 C1087.4 252.5 1087.8 249.2 1086.6 259.0 C1085.4 268.8 1083.2 284.5 1080.2 299.0 C1077.2 313.5 1072.8 332.2 1068.9 346.0 C1065.0 359.8 1061.6 366.2 1056.6 382.0 C1051.6 397.8 1041.7 430.8 1038.7 440.6 M914.0 475.0 C922.7 473.2 946.2 469.9 966.0 464.5 C985.8 459.1 1014.5 448.4 1032.9 442.8 C1051.3 437.2 1066.8 433.0 1076.3 431.2 C1085.8 429.4 1081.5 429.5 1089.6 432.0 C1097.7 434.5 1112.2 442.2 1124.7 446.2 C1137.2 450.2 1155.0 454.7 1164.7 456.2 C1174.4 457.7 1175.8 456.4 1183.0 455.4 C1190.2 454.4 1201.2 450.8 1208.2 450.4 C1215.2 450.0 1218.9 451.2 1224.8 452.9 C1230.7 454.6 1237.2 457.2 1243.4 460.7 C1249.6 464.2 1258.9 471.8 1262.0 474.0 M1893.0 419.6 C1888.5 419.9 1874.6 419.0 1866.1 421.3 C1857.5 423.6 1849.8 428.8 1841.7 433.5 C1833.6 438.2 1825.5 445.7 1817.3 449.8 C1809.1 453.9 1799.0 453.9 1792.8 457.9 C1786.5 461.9 1782.0 471.3 1779.8 474.0" fill="none" stroke="#fde6a3" stroke-width="6.4" stroke-linejoin="round" /><path d="M1419.2 186.0 C1416.7 189.8 1409.1 201.3 1404.0 209.0 C1398.9 216.7 1392.7 223.4 1388.5 232.0 C1384.3 240.6 1382.5 251.6 1379.0 260.7 C1375.5 269.8 1371.9 279.6 1367.6 286.8 C1363.2 294.0 1356.8 298.5 1352.9 304.0 C1349.0 309.5 1348.6 313.0 1344.2 320.0 C1339.8 327.0 1331.7 338.3 1326.8 346.0 C1321.9 353.7 1321.3 355.9 1314.7 366.0 C1308.1 376.1 1295.0 394.9 1286.9 406.9 C1278.8 418.9 1271.8 429.3 1266.0 438.0 C1260.2 446.7 1255.3 453.2 1252.0 459.0 C1248.7 464.8 1247.0 470.7 1246.0 473.0 M1457.0 186.0 C1452.7 193.2 1437.9 217.8 1431.0 229.4 C1424.1 241.0 1422.9 246.9 1415.4 255.5 C1407.9 264.1 1395.3 272.9 1386.0 280.7 C1376.7 288.5 1365.2 295.0 1359.8 302.4 C1354.4 309.8 1356.1 316.3 1353.8 325.0 C1351.5 333.7 1348.8 344.5 1346.0 354.7 C1343.2 364.9 1339.8 378.2 1337.2 386.0 C1334.6 393.8 1331.5 399.1 1330.3 401.7 M1484.0 186.0 C1481.8 190.3 1477.8 200.7 1471.0 212.0 C1464.2 223.3 1452.5 239.0 1443.0 253.8 C1433.5 268.6 1422.6 286.5 1413.7 300.7 C1404.8 314.9 1397.2 327.0 1389.4 338.9 C1381.6 350.8 1372.9 363.9 1366.8 372.0 C1360.7 380.1 1356.1 383.7 1352.9 387.8 C1349.7 391.9 1350.9 392.4 1347.7 396.4 C1344.5 400.4 1338.2 406.2 1333.8 412.0 C1329.4 417.8 1325.4 425.1 1321.6 431.2 C1317.8 437.3 1314.4 443.1 1311.2 448.6 C1308.0 454.1 1304.7 460.1 1302.5 464.2 C1300.3 468.3 1298.8 471.5 1298.0 473.0 M1220.0 322.6 C1224.8 327.4 1240.1 341.9 1248.6 351.3 C1257.1 360.7 1266.7 371.2 1271.2 379.0 C1275.7 386.8 1275.0 392.4 1275.6 398.2 C1276.2 404.0 1277.2 406.9 1274.7 413.8 C1272.2 420.8 1264.4 432.7 1260.8 439.9 C1257.2 447.1 1254.3 454.1 1253.0 457.0 M914.0 441.2 C919.9 441.6 939.3 442.6 949.4 443.7 C959.5 444.8 966.0 445.8 974.4 447.9 C982.8 450.0 992.5 453.1 999.5 456.2 C1006.5 459.2 1010.9 463.3 1016.2 466.2 C1021.5 469.1 1028.7 472.3 1031.2 473.5" fill="none" stroke="#d9d8d5" stroke-width="3.0" stroke-linejoin="round" /><path d="M1419.2 186.0 C1416.7 189.8 1409.1 201.3 1404.0 209.0 C1398.9 216.7 1392.7 223.4 1388.5 232.0 C1384.3 240.6 1382.5 251.6 1379.0 260.7 C1375.5 269.8 1371.9 279.6 1367.6 286.8 C1363.2 294.0 1356.8 298.5 1352.9 304.0 C1349.0 309.5 1348.6 313.0 1344.2 320.0 C1339.8 327.0 1331.7 338.3 1326.8 346.0 C1321.9 353.7 1321.3 355.9 1314.7 366.0 C1308.1 376.1 1295.0 394.9 1286.9 406.9 C1278.8 418.9 1271.8 429.3 1266.0 438.0 C1260.2 446.7 1255.3 453.2 1252.0 459.0 C1248.7 464.8 1247.0 470.7 1246.0 473.0 M1457.0 186.0 C1452.7 193.2 1437.9 217.8 1431.0 229.4 C1424.1 241.0 1422.9 246.9 1415.4 255.5 C1407.9 264.1 1395.3 272.9 1386.0 280.7 C1376.7 288.5 1365.2 295.0 1359.8 302.4 C1354.4 309.8 1356.1 316.3 1353.8 325.0 C1351.5 333.7 1348.8 344.5 1346.0 354.7 C1343.2 364.9 1339.8 378.2 1337.2 386.0 C1334.6 393.8 1331.5 399.1 1330.3 401.7 M1484.0 186.0 C1481.8 190.3 1477.8 200.7 1471.0 212.0 C1464.2 223.3 1452.5 239.0 1443.0 253.8 C1433.5 268.6 1422.6 286.5 1413.7 300.7 C1404.8 314.9 1397.2 327.0 1389.4 338.9 C1381.6 350.8 1372.9 363.9 1366.8 372.0 C1360.7 380.1 1356.1 383.7 1352.9 387.8 C1349.7 391.9 1350.9 392.4 1347.7 396.4 C1344.5 400.4 1338.2 406.2 1333.8 412.0 C1329.4 417.8 1325.4 425.1 1321.6 431.2 C1317.8 437.3 1314.4 443.1 1311.2 448.6 C1308.0 454.1 1304.7 460.1 1302.5 464.2 C1300.3 468.3 1298.8 471.5 1298.0 473.0 M1220.0 322.6 C1224.8 327.4 1240.1 341.9 1248.6 351.3 C1257.1 360.7 1266.7 371.2 1271.2 379.0 C1275.7 386.8 1275.0 392.4 1275.6 398.2 C1276.2 404.0 1277.2 406.9 1274.7 413.8 C1272.2 420.8 1264.4 432.7 1260.8 439.9 C1257.2 447.1 1254.3 454.1 1253.0 457.0 M914.0 441.2 C919.9 441.6 939.3 442.6 949.4 443.7 C959.5 444.8 966.0 445.8 974.4 447.9 C982.8 450.0 992.5 453.1 999.5 456.2 C1006.5 459.2 1010.9 463.3 1016.2 466.2 C1021.5 469.1 1028.7 472.3 1031.2 473.5" fill="none" stroke="#8c8c8c" stroke-width="1.7" stroke-linejoin="round" /><path d="M1419.2 186.0 C1416.7 189.8 1409.1 201.3 1404.0 209.0 C1398.9 216.7 1392.7 223.4 1388.5 232.0 C1384.3 240.6 1382.5 251.6 1379.0 260.7 C1375.5 269.8 1371.9 279.6 1367.6 286.8 C1363.2 294.0 1356.8 298.5 1352.9 304.0 C1349.0 309.5 1348.6 313.0 1344.2 320.0 C1339.8 327.0 1331.7 338.3 1326.8 346.0 C1321.9 353.7 1321.3 355.9 1314.7 366.0 C1308.1 376.1 1295.0 394.9 1286.9 406.9 C1278.8 418.9 1271.8 429.3 1266.0 438.0 C1260.2 446.7 1255.3 453.2 1252.0 459.0 C1248.7 464.8 1247.0 470.7 1246.0 473.0 M1457.0 186.0 C1452.7 193.2 1437.9 217.8 1431.0 229.4 C1424.1 241.0 1422.9 246.9 1415.4 255.5 C1407.9 264.1 1395.3 272.9 1386.0 280.7 C1376.7 288.5 1365.2 295.0 1359.8 302.4 C1354.4 309.8 1356.1 316.3 1353.8 325.0 C1351.5 333.7 1348.8 344.5 1346.0 354.7 C1343.2 364.9 1339.8 378.2 1337.2 386.0 C1334.6 393.8 1331.5 399.1 1330.3 401.7 M1484.0 186.0 C1481.8 190.3 1477.8 200.7 1471.0 212.0 C1464.2 223.3 1452.5 239.0 1443.0 253.8 C1433.5 268.6 1422.6 286.5 1413.7 300.7 C1404.8 314.9 1397.2 327.0 1389.4 338.9 C1381.6 350.8 1372.9 363.9 1366.8 372.0 C1360.7 380.1 1356.1 383.7 1352.9 387.8 C1349.7 391.9 1350.9 392.4 1347.7 396.4 C1344.5 400.4 1338.2 406.2 1333.8 412.0 C1329.4 417.8 1325.4 425.1 1321.6 431.2 C1317.8 437.3 1314.4 443.1 1311.2 448.6 C1308.0 454.1 1304.7 460.1 1302.5 464.2 C1300.3 468.3 1298.8 471.5 1298.0 473.0 M1220.0 322.6 C1224.8 327.4 1240.1 341.9 1248.6 351.3 C1257.1 360.7 1266.7 371.2 1271.2 379.0 C1275.7 386.8 1275.0 392.4 1275.6 398.2 C1276.2 404.0 1277.2 406.9 1274.7 413.8 C1272.2 420.8 1264.4 432.7 1260.8 439.9 C1257.2 447.1 1254.3 454.1 1253.0 457.0 M914.0 441.2 C919.9 441.6 939.3 442.6 949.4 443.7 C959.5 444.8 966.0 445.8 974.4 447.9 C982.8 450.0 992.5 453.1 999.5 456.2 C1006.5 459.2 1010.9 463.3 1016.2 466.2 C1021.5 469.1 1028.7 472.3 1031.2 473.5" fill="none" stroke="#fbfbfa" stroke-width="1.7" stroke-linejoin="round" stroke-dasharray="9 10" stroke-dashoffset="4"/><use href="#trn" x="1472.7" y="205.6"/><use href="#trn" x="1301" y="454"/><g fill="none" stroke="#f9f7f4" stroke-width="2.6" stroke-linejoin="round"><text x="937.0" y="197.0" font-size="11" >何家</text><text x="991.4" y="198.7" font-size="11" >龙兴</text><text x="1039.6" y="198.0" font-size="11" >中山头</text><text x="943.6" y="230.3" font-size="11" >刘家</text><text x="1048.4" y="259.0" font-size="11" >贤良</text><text x="1114.6" y="299.6" font-size="11" >大都湖</text><text x="1209.7" y="286.6" font-size="11" >张表</text><text x="962.0" y="333.0" font-size="11" >双眼塘</text><text x="1786.0" y="473.3" font-size="11" >嵋合村</text><text x="1011.6" y="229.6" font-size="11" >柳州市山头小学</text><text x="954.0" y="380.0" font-size="11" >金福小苑</text><text x="925.6" y="415.0" font-size="11" >鼓岭小苑</text><text x="975.0" y="461.9" font-size="11" >盛世名庭</text><text x="1199.3" y="388.2" font-size="11" >富鑫嘉园</text><text x="1199.0" y="420.8" font-size="11" >一区桌球室</text><text x="1186.9" y="446.2" font-size="11" >尚好嘉苑</text><text x="1199.0" y="474.5" font-size="11" >金丽苑</text><text x="1338.5" y="251.8" font-size="11" >柳州南站</text><text x="1453.0" y="268.0" font-size="11" >刘家大院</text><text x="1374.3" y="316.0" font-size="11" >恒大雅苑</text><text x="1464.5" y="320.8" font-size="11" >嘉华苑</text><text x="1572.0" y="286.0" font-size="11" >大海旧货</text><text x="1564.7" y="318.5" font-size="11" >华韵上城</text><text x="1602.8" y="341.4" font-size="11" >康盛花苑</text><text x="1405.9" y="389.9" font-size="11" >青华中学</text><text x="1505.2" y="382.7" font-size="11" >金兴苑</text><text x="1355.4" y="439.7" font-size="11" >来宾实验高中</text><text x="1606.4" y="398.0" font-size="11" >祥和家园</text><text x="1589.0" y="436.0" font-size="11" >金岭市场综合楼</text><text x="1659.0" y="460.8" font-size="11" >宏发家园小区</text><text x="1677.2" y="224.2" font-size="11" >愿景品格</text><text x="1754.6" y="228.3" font-size="11" >魅力·首座</text><text x="1677.5" y="293.7" font-size="11" >柳州和美小学</text><text x="1816.9" y="343.8" font-size="11" >航五路小学</text><text x="1732.6" y="391.9" font-size="11" >南苑小区</text><text x="1717.1" y="411.9" font-size="11" >航阳小苑廉租房</text><text x="1679.7" y="190.2" font-size="11" >宏城绿都</text><text x="1840.9" y="306.9" font-size="11" >柳州市航</text><text x="1840.9" y="318.3" font-size="11" >生路中学</text><text x="1827.9" y="387.8" font-size="11" >宝晟综合</text><text x="1827.9" y="399.2" font-size="11" >交易市场</text><text x="918.5" y="436.8" font-size="11" >米兰小区</text><text x="907.5" y="436.8" font-size="11" >兰</text><text x="913.5" y="459.7" font-size="12" font-weight="bold">镇</text><text x="1873.8" y="419.2" font-size="11" >南环</text><text x="1881.6" y="447.2" font-size="11" >门</text><text x="1881.6" y="194.0" font-size="11" >柳</text><text x="1881.6" y="206.3" font-size="11" >十</text><text x="1637.3" y="479.2" font-size="11" >基隆下村</text><text x="1827.4" y="257.8" font-size="13" font-weight="bold">东苑小区</text><text x="1829.0" y="272.1" font-size="13" font-weight="bold">(航三路)</text></g><use href="#sch" x="1101.5" y="225.6"/><use href="#poi" x="942.6" y="376.0"/><use href="#poi" x="915.0" y="411.0"/><use href="#poi" x="963.7" y="457.9"/><use href="#poi" x="1186.9" y="384.2"/><use href="#pp" x="1185.0" y="416.8"/><use href="#poi" x="1175.5" y="442.2"/><use href="#poi" x="1186.0" y="470.5"/><use href="#sta" x="1326.4" y="247.8"/><use href="#poi" x="1441.7" y="264.0"/><use href="#poi" x="1428.7" y="312.0"/><use href="#poi" x="1506.9" y="316.8"/><use href="#shop" x="1560.5" y="282.0"/><use href="#poi" x="1553.7" y="314.5"/><use href="#poi" x="1590.7" y="337.4"/><use href="#sch" x="1393.8" y="385.9"/><use href="#poi" x="1547.6" y="378.7"/><use href="#sch" x="1342.4" y="435.7"/><use href="#poi" x="1595.0" y="394.0"/><use href="#poi" x="1576.7" y="432.0"/><use href="#poi" x="1646.8" y="456.8"/><use href="#poi" x="1668.8" y="187.4"/><use href="#poi" x="1665.8" y="220.2"/><use href="#poi" x="1739.1" y="224.3"/><use href="#sch" x="1665.0" y="289.7"/><use href="#sch" x="1804.6" y="339.8"/><use href="#poi" x="1720.9" y="387.9"/><use href="#poi" x="1704.1" y="407.9"/><use href="#poi" x="1582.6" y="184.5"/><use href="#sch" x="1870.0" y="197.1"/><use href="#sch" x="1829" y="308.5"/><use href="#shop" x="1816" y="389.8"/><g stroke-width=".18"><text x="937.0" y="197.0" font-size="11" fill="#7a7a1c" stroke="#7a7a1c"  >何家</text><text x="991.4" y="198.7" font-size="11" fill="#7a7a1c" stroke="#7a7a1c"  >龙兴</text><text x="1039.6" y="198.0" font-size="11" fill="#7a7a1c" stroke="#7a7a1c"  >中山头</text><text x="943.6" y="230.3" font-size="11" fill="#7a7a1c" stroke="#7a7a1c"  >刘家</text><text x="1048.4" y="259.0" font-size="11" fill="#7a7a1c" stroke="#7a7a1c"  >贤良</text><text x="1114.6" y="299.6" font-size="11" fill="#7a7a1c" stroke="#7a7a1c"  >大都湖</text><text x="1209.7" y="286.6" font-size="11" fill="#7a7a1c" stroke="#7a7a1c"  >张表</text><text x="962.0" y="333.0" font-size="11" fill="#7a7a1c" stroke="#7a7a1c"  >双眼塘</text><text x="1786.0" y="473.3" font-size="11" fill="#74741a" stroke="#74741a"  stroke-width=".5">嵋合村</text><text x="1011.6" y="229.6" font-size="11" fill="#555" stroke="#555"  >柳州市山头小学</text><text x="954.0" y="380.0" font-size="11" fill="#555" stroke="#555"  >金福小苑</text><text x="925.6" y="415.0" font-size="11" fill="#555" stroke="#555"  >鼓岭小苑</text><text x="975.0" y="461.9" font-size="11" fill="#555" stroke="#555"  >盛世名庭</text><text x="1199.3" y="388.2" font-size="11" fill="#555" stroke="#555"  >富鑫嘉园</text><text x="1199.0" y="420.8" font-size="11" fill="#555" stroke="#555"  >一区桌球室</text><text x="1186.9" y="446.2" font-size="11" fill="#555" stroke="#555"  >尚好嘉苑</text><text x="1199.0" y="474.5" font-size="11" fill="#555" stroke="#555"  >金丽苑</text><text x="1338.5" y="251.8" font-size="11" fill="#555" stroke="#555"  >柳州南站</text><text x="1453.0" y="268.0" font-size="11" fill="#555" stroke="#555"  >刘家大院</text><text x="1374.3" y="316.0" font-size="11" fill="#555" stroke="#555"  >恒大雅苑</text><text x="1464.5" y="320.8" font-size="11" fill="#555" stroke="#555"  >嘉华苑</text><text x="1572.0" y="286.0" font-size="11" fill="#555" stroke="#555"  >大海旧货</text><text x="1564.7" y="318.5" font-size="11" fill="#555" stroke="#555"  >华韵上城</text><text x="1602.8" y="341.4" font-size="11" fill="#555" stroke="#555"  >康盛花苑</text><text x="1405.9" y="389.9" font-size="11" fill="#555" stroke="#555"  >青华中学</text><text x="1505.2" y="382.7" font-size="11" fill="#555" stroke="#555"  >金兴苑</text><text x="1355.4" y="439.7" font-size="11" fill="#555" stroke="#555"  >来宾实验高中</text><text x="1606.4" y="398.0" font-size="11" fill="#555" stroke="#555"  >祥和家园</text><text x="1589.0" y="436.0" font-size="11" fill="#555" stroke="#555"  >金岭市场综合楼</text><text x="1659.0" y="460.8" font-size="11" fill="#555" stroke="#555"  >宏发家园小区</text><text x="1677.2" y="224.2" font-size="11" fill="#555" stroke="#555"  >愿景品格</text><text x="1754.6" y="228.3" font-size="11" fill="#555" stroke="#555"  >魅力·首座</text><text x="1677.5" y="293.7" font-size="11" fill="#555" stroke="#555"  >柳州和美小学</text><text x="1816.9" y="343.8" font-size="11" fill="#555" stroke="#555"  >航五路小学</text><text x="1732.6" y="391.9" font-size="11" fill="#555" stroke="#555"  >南苑小区</text><text x="1717.1" y="411.9" font-size="11" fill="#555" stroke="#555"  >航阳小苑廉租房</text><text x="1679.7" y="190.2" font-size="11" fill="#555" stroke="#555"  >宏城绿都</text><text x="1840.9" y="306.9" font-size="11" fill="#555" stroke="#555"  >柳州市航</text><text x="1840.9" y="318.3" font-size="11" fill="#555" stroke="#555"  >生路中学</text><text x="1827.9" y="387.8" font-size="11" fill="#555" stroke="#555"  >宝晟综合</text><text x="1827.9" y="399.2" font-size="11" fill="#555" stroke="#555"  >交易市场</text><text x="918.5" y="436.8" font-size="11" fill="#555" stroke="#555"  >米兰小区</text><text x="907.5" y="436.8" font-size="11" fill="#555" stroke="#555"  >兰</text><text x="913.5" y="459.7" font-size="12" fill="#222" stroke="#222" font-weight="bold" >镇</text><text x="1873.8" y="419.2" font-size="11" fill="#444" stroke="#444"  >南环</text><text x="1881.6" y="447.2" font-size="11" fill="#444" stroke="#444"  >门</text><text x="1881.6" y="194.0" font-size="11" fill="#555" stroke="#555"  >柳</text><text x="1881.6" y="206.3" font-size="11" fill="#555" stroke="#555"  >十</text><text x="1637.3" y="479.2" font-size="11" fill="#555" stroke="#555"  >基隆下村</text><text x="1827.4" y="257.8" font-size="13" fill="#6b4e1c" stroke="#6b4e1c" font-weight="bold" stroke-width="0">东苑小区</text><text x="1829.0" y="272.1" font-size="13" fill="#6b4e1c" stroke="#6b4e1c" font-weight="bold" stroke-width="0">(航三路)</text></g><text x="1087.5" y="198.7" font-size="13" text-anchor="middle" transform="rotate(0 1087.5 194.0)" fill="none" stroke="#fdfcf8" stroke-width="2.8" stroke-linejoin="round">路</text><text x="1087.5" y="198.7" font-size="13" text-anchor="middle" transform="rotate(0 1087.5 194.0)" fill="#2e2e2e" stroke="#2e2e2e" stroke-width=".2">路</text><text x="1079.4" y="305.2" font-size="13" text-anchor="middle" transform="rotate(14 1079.4 300.5)" fill="none" stroke="#fdfcf8" stroke-width="2.8" stroke-linejoin="round">瑞</text><text x="1079.4" y="305.2" font-size="13" text-anchor="middle" transform="rotate(14 1079.4 300.5)" fill="#2e2e2e" stroke="#2e2e2e" stroke-width=".2">瑞</text><text x="1074.5" y="320.7" font-size="13" text-anchor="middle" transform="rotate(14 1074.5 316.0)" fill="none" stroke="#fdfcf8" stroke-width="2.8" stroke-linejoin="round">龙</text><text x="1074.5" y="320.7" font-size="13" text-anchor="middle" transform="rotate(14 1074.5 316.0)" fill="#2e2e2e" stroke="#2e2e2e" stroke-width=".2">龙</text><text x="1071.0" y="335.2" font-size="13" text-anchor="middle" transform="rotate(14 1071.0 330.5)" fill="none" stroke="#fdfcf8" stroke-width="2.8" stroke-linejoin="round">路</text><text x="1071.0" y="335.2" font-size="13" text-anchor="middle" transform="rotate(14 1071.0 330.5)" fill="#2e2e2e" stroke="#2e2e2e" stroke-width=".2">路</text><text x="1254.4" y="207.5" font-size="13" text-anchor="middle" transform="rotate(25 1254.4 202.8)" fill="none" stroke="#fdfcf8" stroke-width="2.8" stroke-linejoin="round">柳</text><text x="1254.4" y="207.5" font-size="13" text-anchor="middle" transform="rotate(25 1254.4 202.8)" fill="#2e2e2e" stroke="#2e2e2e" stroke-width=".2">柳</text><text x="1247.5" y="222.2" font-size="13" text-anchor="middle" transform="rotate(25 1247.5 217.5)" fill="none" stroke="#fdfcf8" stroke-width="2.8" stroke-linejoin="round">工</text><text x="1247.5" y="222.2" font-size="13" text-anchor="middle" transform="rotate(25 1247.5 217.5)" fill="#2e2e2e" stroke="#2e2e2e" stroke-width=".2">工</text><text x="1240.0" y="236.7" font-size="13" text-anchor="middle" transform="rotate(25 1240.0 232.0)" fill="none" stroke="#fdfcf8" stroke-width="2.8" stroke-linejoin="round">大</text><text x="1240.0" y="236.7" font-size="13" text-anchor="middle" transform="rotate(25 1240.0 232.0)" fill="#2e2e2e" stroke="#2e2e2e" stroke-width=".2">大</text><text x="1232.0" y="249.7" font-size="13" text-anchor="middle" transform="rotate(25 1232.0 245.0)" fill="none" stroke="#fdfcf8" stroke-width="2.8" stroke-linejoin="round">道</text><text x="1232.0" y="249.7" font-size="13" text-anchor="middle" transform="rotate(25 1232.0 245.0)" fill="#2e2e2e" stroke="#2e2e2e" stroke-width=".2">道</text></svg>
<div class="panel" style="left:188px;top:493px;width:1280px;height:386px"><div class="ph"></div><div class="pt" style="left:12px">统计数据</div></div>
<svg class="abs" style="left:1433.55px;top:502.00px" width="20.9" height="20" viewBox="0 0 24 24" preserveAspectRatio="none"><path transform="rotate(90 12 12)" fill="#fff" d="M19.43 12.98c.04-.32.07-.64.07-.98s-.03-.66-.07-.98l2.11-1.65c.19-.15.24-.42.12-.64l-2-3.46c-.12-.22-.39-.3-.61-.22l-2.49 1c-.52-.4-1.08-.73-1.69-.98l-.38-2.65C14.46 2.18 14.25 2 14 2h-4c-.25 0-.46.18-.49.42l-.38 2.65c-.61.25-1.17.59-1.69.98l-2.49-1c-.23-.09-.49 0-.61.22l-2 3.46c-.13.22-.07.49.12.64l2.11 1.65c-.04.32-.07.65-.07.98s.03.66.07.98l-2.11 1.65c-.19.15-.24.42-.12.64l2 3.46c.12.22.39.3.61.22l2.49-1c.52.4 1.08.73 1.69.98l.38 2.65c.03.24.24.42.49.42h4c.25 0 .46-.18.49-.42l.38-2.65c.61-.25 1.17-.59 1.69-.98l2.49 1c.23.09.49 0 .61-.22l2-3.46c.12-.22.07-.49-.12-.64l-2.11-1.65zM12 16.2c-2.32 0-4.2-1.88-4.2-4.2s1.88-4.2 4.2-4.2 4.2 1.88 4.2 4.2-1.88 4.2-4.2 4.2z"/></svg>
<div class="t" style="left:193px;top:534px;height:26px;line-height:26px;font-size:18px;font-weight:bold;color:#333">当日工作完成情况</div>
<div class="t" style="left:1211px;top:535px;height:20px;line-height:20px;font-size:12px;color:#333">计划给点</div>
<div class="abs" style="left:1264px;top:538px;width:25px;height:14px;border-radius:3px;background:#87c73f"></div>
<div class="t" style="left:1299px;top:535px;height:20px;line-height:20px;font-size:12px;color:#333">实际给点</div>
<div class="abs" style="left:1352px;top:538px;width:25px;height:14px;border-radius:3px;background:#1e8ef0"></div>
<div class="t" style="left:1387px;top:535px;height:20px;line-height:20px;font-size:12px;color:#333">给用点</div>
<div class="abs" style="left:1428px;top:538px;width:25px;height:14px;border-radius:3px;background:#ff6060"></div>
<div class="t" style="left:239.5px;top:562px;height:20px;line-height:20px;font-size:12px;color:#333">点</div>
<svg class="abs" style="left:188px;top:560px" width="1280" height="319" viewBox="188 560 1280 319" shape-rendering="crispEdges"><path d="M247.0 593.5 H1417.0" stroke="#ccc" stroke-width="1"/><path d="M247.0 644.5 H1417.0" stroke="#ccc" stroke-width="1"/><path d="M247.0 695.5 H1417.0" stroke="#ccc" stroke-width="1"/><path d="M247.0 747.5 H1417.0" stroke="#ccc" stroke-width="1"/><path d="M247.0 798.5 H1417.0" stroke="#ccc" stroke-width="1"/><rect x="258.1" y="593.5" width="26.0" height="256.0" fill="#87c73f" shape-rendering="auto"/><rect x="291.9" y="798.3" width="26.0" height="51.2" fill="#1e8ef0" shape-rendering="auto"/><rect x="325.7" y="798.3" width="26.0" height="51.2" fill="#ff6060" shape-rendering="auto"/><rect x="375.1" y="798.3" width="26.0" height="51.2" fill="#87c73f" shape-rendering="auto"/><rect x="408.9" y="798.3" width="26.0" height="51.2" fill="#1e8ef0" shape-rendering="auto"/><rect x="442.7" y="798.3" width="26.0" height="51.2" fill="#ff6060" shape-rendering="auto"/><rect x="492.1" y="721.5" width="26.0" height="128.0" fill="#87c73f" shape-rendering="auto"/><rect x="525.9" y="772.7" width="26.0" height="76.8" fill="#1e8ef0" shape-rendering="auto"/><rect x="559.7" y="772.7" width="26.0" height="76.8" fill="#ff6060" shape-rendering="auto"/><rect x="609.1" y="637.0" width="26.0" height="212.5" fill="#87c73f" shape-rendering="auto"/><rect x="642.9" y="747.1" width="26.0" height="102.4" fill="#1e8ef0" shape-rendering="auto"/><rect x="676.7" y="747.1" width="26.0" height="102.4" fill="#ff6060" shape-rendering="auto"/><rect x="726.1" y="798.3" width="26.0" height="51.2" fill="#87c73f" shape-rendering="auto"/><rect x="759.9" y="721.5" width="26.0" height="128.0" fill="#1e8ef0" shape-rendering="auto"/><rect x="793.7" y="721.5" width="26.0" height="128.0" fill="#ff6060" shape-rendering="auto"/><rect x="843.1" y="772.7" width="26.0" height="76.8" fill="#87c73f" shape-rendering="auto"/><rect x="876.9" y="798.3" width="26.0" height="51.2" fill="#1e8ef0" shape-rendering="auto"/><rect x="910.7" y="798.3" width="26.0" height="51.2" fill="#ff6060" shape-rendering="auto"/><rect x="960.1" y="619.1" width="26.0" height="230.4" fill="#87c73f" shape-rendering="auto"/><rect x="993.9" y="823.9" width="26.0" height="25.6" fill="#1e8ef0" shape-rendering="auto"/><rect x="1027.7" y="823.9" width="26.0" height="25.6" fill="#ff6060" shape-rendering="auto"/><rect x="1077.1" y="644.7" width="26.0" height="204.8" fill="#87c73f" shape-rendering="auto"/><rect x="1110.9" y="823.9" width="26.0" height="25.6" fill="#1e8ef0" shape-rendering="auto"/><rect x="1144.7" y="823.9" width="26.0" height="25.6" fill="#ff6060" shape-rendering="auto"/><rect x="1194.1" y="652.4" width="26.0" height="197.1" fill="#87c73f" shape-rendering="auto"/><rect x="1227.9" y="798.3" width="26.0" height="51.2" fill="#1e8ef0" shape-rendering="auto"/><rect x="1261.7" y="798.3" width="26.0" height="51.2" fill="#ff6060" shape-rendering="auto"/><rect x="1311.1" y="626.8" width="26.0" height="222.7" fill="#87c73f" shape-rendering="auto"/><rect x="1344.9" y="823.9" width="26.0" height="25.6" fill="#1e8ef0" shape-rendering="auto"/><rect x="1378.7" y="823.9" width="26.0" height="25.6" fill="#ff6060" shape-rendering="auto"/><path d="M246.5 593.0 V850.0" stroke="#333" stroke-width="1"/><path d="M246.0 849.5 H1417.0" stroke="#333" stroke-width="1"/><path d="M241.0 593.5 H246.0" stroke="#333" stroke-width="1"/><path d="M241.0 644.5 H246.0" stroke="#333" stroke-width="1"/><path d="M241.0 695.5 H246.0" stroke="#333" stroke-width="1"/><path d="M241.0 747.5 H246.0" stroke="#333" stroke-width="1"/><path d="M241.0 798.5 H246.0" stroke="#333" stroke-width="1"/><path d="M241.0 849.5 H246.0" stroke="#333" stroke-width="1"/><path d="M305.5 850.0 V855.0" stroke="#333" stroke-width="1"/><path d="M421.5 850.0 V855.0" stroke="#333" stroke-width="1"/><path d="M539.5 850.0 V855.0" stroke="#333" stroke-width="1"/><path d="M655.5 850.0 V855.0" stroke="#333" stroke-width="1"/><path d="M773.5 850.0 V855.0" stroke="#333" stroke-width="1"/><path d="M889.5 850.0 V855.0" stroke="#333" stroke-width="1"/><path d="M1007.5 850.0 V855.0" stroke="#333" stroke-width="1"/><path d="M1123.5 850.0 V855.0" stroke="#333" stroke-width="1"/><path d="M1241.5 850.0 V855.0" stroke="#333" stroke-width="1"/><path d="M1357.5 850.0 V855.0" stroke="#333" stroke-width="1"/></svg>
<div class="t" style="left:200px;width:38px;text-align:right;top:583.0px;height:20px;line-height:20px;font-size:12px;color:#333">10</div>
<div class="t" style="left:200px;width:38px;text-align:right;top:634.2px;height:20px;line-height:20px;font-size:12px;color:#333">8</div>
<div class="t" style="left:200px;width:38px;text-align:right;top:685.4px;height:20px;line-height:20px;font-size:12px;color:#333">6</div>
<div class="t" style="left:200px;width:38px;text-align:right;top:736.6px;height:20px;line-height:20px;font-size:12px;color:#333">4</div>
<div class="t" style="left:200px;width:38px;text-align:right;top:787.8px;height:20px;line-height:20px;font-size:12px;color:#333">2</div>
<div class="t" style="left:200px;width:38px;text-align:right;top:839.0px;height:20px;line-height:20px;font-size:12px;color:#333">0</div>
<div class="t" style="left:255.5px;width:100px;text-align:center;top:854px;height:20px;line-height:20px;font-size:12px;color:#333">1号大机组</div>
<div class="t" style="left:372.5px;width:100px;text-align:center;top:854px;height:20px;line-height:20px;font-size:12px;color:#333">2号大机组</div>
<div class="t" style="left:489.5px;width:100px;text-align:center;top:854px;height:20px;line-height:20px;font-size:12px;color:#333">3号大机组</div>
<div class="t" style="left:606.5px;width:100px;text-align:center;top:854px;height:20px;line-height:20px;font-size:12px;color:#333">4号大机组</div>
<div class="t" style="left:723.5px;width:100px;text-align:center;top:854px;height:20px;line-height:20px;font-size:12px;color:#333">5号大机组</div>
<div class="t" style="left:840.5px;width:100px;text-align:center;top:854px;height:20px;line-height:20px;font-size:12px;color:#333">6号大机组</div>
<div class="t" style="left:957.5px;width:100px;text-align:center;top:854px;height:20px;line-height:20px;font-size:12px;color:#333">7号大机组</div>
<div class="t" style="left:1074.5px;width:100px;text-align:center;top:854px;height:20px;line-height:20px;font-size:12px;color:#333">8号大机组</div>
<div class="t" style="left:1191.5px;width:100px;text-align:center;top:854px;height:20px;line-height:20px;font-size:12px;color:#333">9号大机组</div>
<div class="t" style="left:1308.5px;width:100px;text-align:center;top:854px;height:20px;line-height:20px;font-size:12px;color:#333">10号大机组</div>
<div class="panel" style="left:1480px;top:493px;width:422px;height:386px"><div class="ph"></div><div class="pt" style="left:12px">规章制度</div></div>
<svg class="abs" style="left:1867.55px;top:502.00px" width="20.9" height="20" viewBox="0 0 24 24" preserveAspectRatio="none"><path transform="rotate(90 12 12)" fill="#fff" d="M19.43 12.98c.04-.32.07-.64.07-.98s-.03-.66-.07-.98l2.11-1.65c.19-.15.24-.42.12-.64l-2-3.46c-.12-.22-.39-.3-.61-.22l-2.49 1c-.52-.4-1.08-.73-1.69-.98l-.38-2.65C14.46 2.18 14.25 2 14 2h-4c-.25 0-.46.18-.49.42l-.38 2.65c-.61.25-1.17.59-1.69.98l-2.49-1c-.23-.09-.49 0-.61.22l-2 3.46c-.13.22-.07.49.12.64l2.11 1.65c-.04.32-.07.65-.07.98s.03.66.07.98l-2.11 1.65c-.19.15-.24.42-.12.64l2 3.46c.12.22.39.3.61.22l2.49-1c.52.4 1.08.73 1.69.98l.38 2.65c.03.24.24.42.49.42h4c.25 0 .46-.18.49-.42l.38-2.65c.61-.25 1.17-.59 1.69-.98l2.49 1c.23.09.49 0 .61-.22l2-3.46c.12-.22.07-.49-.12-.64l-2.11-1.65zM12 16.2c-2.32 0-4.2-1.88-4.2-4.2s1.88-4.2 4.2-4.2 4.2 1.88 4.2 4.2-1.88 4.2-4.2 4.2z"/></svg>
<div class="t" style="left:1501px;top:545px;width:379px;height:30px;line-height:32px;border-radius:4px;background:#ebebeb;text-align:center;font-size:16px;color:#666">《人员制度》</div>
<div class="t" style="left:1501px;top:591px;width:379px;height:30px;line-height:32px;border-radius:4px;background:#ebebeb;text-align:center;font-size:16px;color:#666">《检修制度》</div>
<div class="t" style="left:1501px;top:637px;width:379px;height:30px;line-height:32px;border-radius:4px;background:#ebebeb;text-align:center;font-size:16px;color:#666">《部门制度》</div>
</body></html>
